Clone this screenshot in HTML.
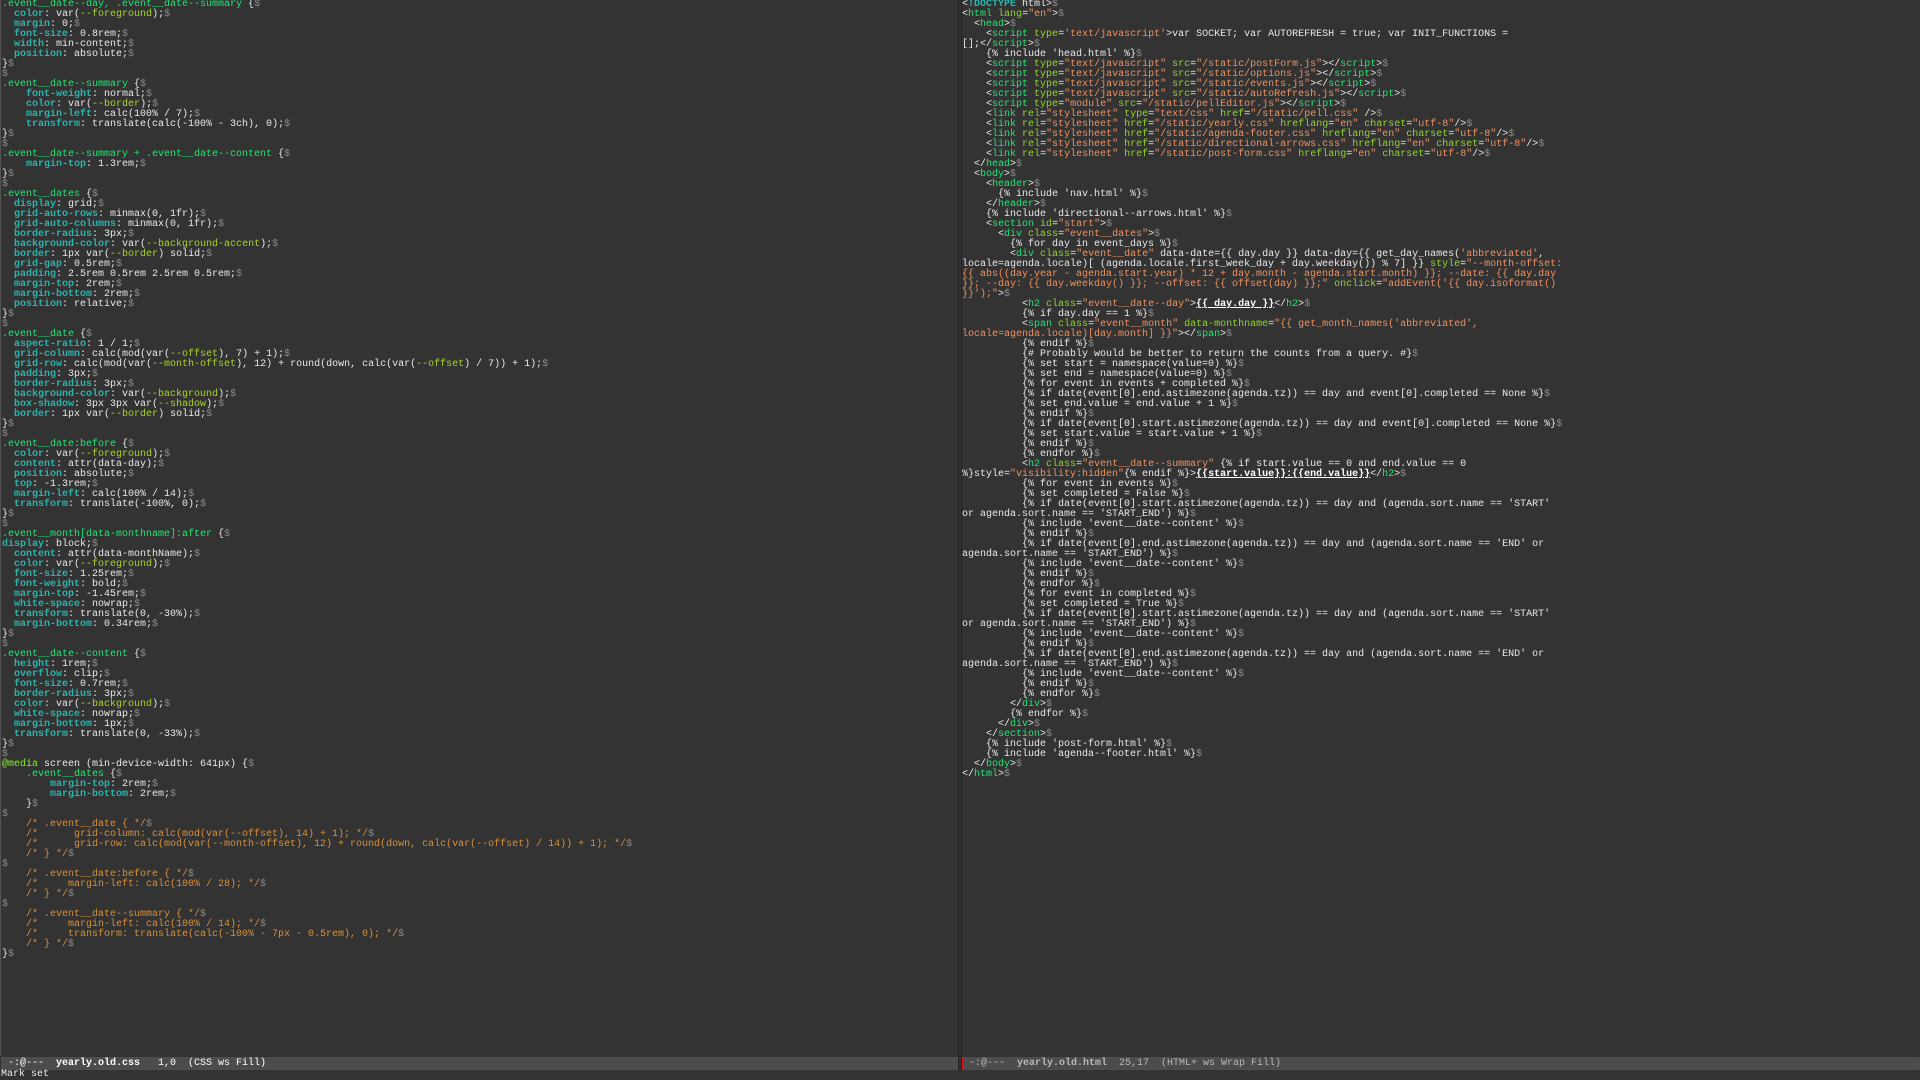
<!DOCTYPE html>
<html><head><meta charset="utf-8"><style>
html,body{margin:0;padding:0;width:1920px;height:1080px;overflow:hidden;background:#333;}
pre{margin:0;font-family:"Liberation Mono","DejaVu Sans Mono",monospace;font-size:10px;line-height:10px;color:#e8e8e8;white-space:pre;overflow:hidden;position:absolute;}
#l{left:2px;top:0;width:955px;height:1056px;}
#r{left:962px;top:0;width:956px;height:1056px;}
.s{color:#1ee872}.p{color:#26b5ad;font-weight:bold}.y{color:#a6d424}.d{color:#8a8a8a}.c{color:#d98f38}
.t{color:#1ee872}.a{color:#8fd42a}.q{color:#f0905e}.b{font-weight:bold;text-decoration:underline;color:#fff}.k{color:#26b5ad;font-weight:bold}.m{color:#80f020}
#div1{position:absolute;left:958px;top:0;width:1px;height:1070px;background:#222}
#div2{position:absolute;left:961px;top:0;width:1px;height:1070px;background:#222}
#edge{position:absolute;left:0;top:0;width:1px;height:1056px;background:#555}
.ml{position:absolute;top:1057px;height:11px;background:#4c4c4c;border:1px solid #e01010;font-family:"Liberation Mono",monospace;font-size:10px;line-height:11px;white-space:pre;color:#fff}
#mb{position:absolute;left:1px;top:1069px;font-family:"Liberation Mono",monospace;font-size:10px;line-height:11px;color:#eee;white-space:pre}
</style></head><body>
<div id="edge"></div><div id="div1"></div><div id="div2"></div>
<pre id="l"><span class="s">.event__date--day, .event__date--summary</span> {<span class="d">$</span>
  <span class="p">color</span>: var(<span class="y">--foreground</span>);<span class="d">$</span>
  <span class="p">margin</span>: 0;<span class="d">$</span>
  <span class="p">font-size</span>: 0.8rem;<span class="d">$</span>
  <span class="p">width</span>: min-content;<span class="d">$</span>
  <span class="p">position</span>: absolute;<span class="d">$</span>
}<span class="d">$</span>
<span class="d">$</span>
<span class="s">.event__date--summary</span> {<span class="d">$</span>
    <span class="p">font-weight</span>: normal;<span class="d">$</span>
    <span class="p">color</span>: var(<span class="y">--border</span>);<span class="d">$</span>
    <span class="p">margin-left</span>: calc(100% / 7);<span class="d">$</span>
    <span class="p">transform</span>: translate(calc(-100% - 3ch), 0);<span class="d">$</span>
}<span class="d">$</span>
<span class="d">$</span>
<span class="s">.event__date--summary + .event__date--content</span> {<span class="d">$</span>
    <span class="p">margin-top</span>: 1.3rem;<span class="d">$</span>
}<span class="d">$</span>
<span class="d">$</span>
<span class="s">.event__dates</span> {<span class="d">$</span>
  <span class="p">display</span>: grid;<span class="d">$</span>
  <span class="p">grid-auto-rows</span>: minmax(0, 1fr);<span class="d">$</span>
  <span class="p">grid-auto-columns</span>: minmax(0, 1fr);<span class="d">$</span>
  <span class="p">border-radius</span>: 3px;<span class="d">$</span>
  <span class="p">background-color</span>: var(<span class="y">--background-accent</span>);<span class="d">$</span>
  <span class="p">border</span>: 1px var(<span class="y">--border</span>) solid;<span class="d">$</span>
  <span class="p">grid-gap</span>: 0.5rem;<span class="d">$</span>
  <span class="p">padding</span>: 2.5rem 0.5rem 2.5rem 0.5rem;<span class="d">$</span>
  <span class="p">margin-top</span>: 2rem;<span class="d">$</span>
  <span class="p">margin-bottom</span>: 2rem;<span class="d">$</span>
  <span class="p">position</span>: relative;<span class="d">$</span>
}<span class="d">$</span>
<span class="d">$</span>
<span class="s">.event__date</span> {<span class="d">$</span>
  <span class="p">aspect-ratio</span>: 1 / 1;<span class="d">$</span>
  <span class="p">grid-column</span>: calc(mod(var(<span class="y">--offset</span>), 7) + 1);<span class="d">$</span>
  <span class="p">grid-row</span>: calc(mod(var(<span class="y">--month-offset</span>), 12) + round(down, calc(var(<span class="y">--offset</span>) / 7)) + 1);<span class="d">$</span>
  <span class="p">padding</span>: 3px;<span class="d">$</span>
  <span class="p">border-radius</span>: 3px;<span class="d">$</span>
  <span class="p">background-color</span>: var(<span class="y">--background</span>);<span class="d">$</span>
  <span class="p">box-shadow</span>: 3px 3px var(<span class="y">--shadow</span>);<span class="d">$</span>
  <span class="p">border</span>: 1px var(<span class="y">--border</span>) solid;<span class="d">$</span>
}<span class="d">$</span>
<span class="d">$</span>
<span class="s">.event__date:before</span> {<span class="d">$</span>
  <span class="p">color</span>: var(<span class="y">--foreground</span>);<span class="d">$</span>
  <span class="p">content</span>: attr(data-day);<span class="d">$</span>
  <span class="p">position</span>: absolute;<span class="d">$</span>
  <span class="p">top</span>: -1.3rem;<span class="d">$</span>
  <span class="p">margin-left</span>: calc(100% / 14);<span class="d">$</span>
  <span class="p">transform</span>: translate(-100%, 0);<span class="d">$</span>
}<span class="d">$</span>
<span class="d">$</span>
<span class="s">.event__month[data-monthname]:after</span> {<span class="d">$</span>
<span class="p">display</span>: block;<span class="d">$</span>
  <span class="p">content</span>: attr(data-monthName);<span class="d">$</span>
  <span class="p">color</span>: var(<span class="y">--foreground</span>);<span class="d">$</span>
  <span class="p">font-size</span>: 1.25rem;<span class="d">$</span>
  <span class="p">font-weight</span>: bold;<span class="d">$</span>
  <span class="p">margin-top</span>: -1.45rem;<span class="d">$</span>
  <span class="p">white-space</span>: nowrap;<span class="d">$</span>
  <span class="p">transform</span>: translate(0, -30%);<span class="d">$</span>
  <span class="p">margin-bottom</span>: 0.34rem;<span class="d">$</span>
}<span class="d">$</span>
<span class="d">$</span>
<span class="s">.event__date--content</span> {<span class="d">$</span>
  <span class="p">height</span>: 1rem;<span class="d">$</span>
  <span class="p">overflow</span>: clip;<span class="d">$</span>
  <span class="p">font-size</span>: 0.7rem;<span class="d">$</span>
  <span class="p">border-radius</span>: 3px;<span class="d">$</span>
  <span class="p">color</span>: var(<span class="y">--background</span>);<span class="d">$</span>
  <span class="p">white-space</span>: nowrap;<span class="d">$</span>
  <span class="p">margin-bottom</span>: 1px;<span class="d">$</span>
  <span class="p">transform</span>: translate(0, -33%);<span class="d">$</span>
}<span class="d">$</span>
<span class="d">$</span>
<span class="m">@media</span> screen (min-device-width: 641px) {<span class="d">$</span>
    <span class="s">.event__dates</span> {<span class="d">$</span>
        <span class="p">margin-top</span>: 2rem;<span class="d">$</span>
        <span class="p">margin-bottom</span>: 2rem;<span class="d">$</span>
    }<span class="d">$</span>
<span class="d">$</span>
<span class="c">    /* .event__date { */</span><span class="d">$</span>
<span class="c">    /*      grid-column: calc(mod(var(--offset), 14) + 1); */</span><span class="d">$</span>
<span class="c">    /*      grid-row: calc(mod(var(--month-offset), 12) + round(down, calc(var(--offset) / 14)) + 1); */</span><span class="d">$</span>
<span class="c">    /* } */</span><span class="d">$</span>
<span class="d">$</span>
<span class="c">    /* .event__date:before { */</span><span class="d">$</span>
<span class="c">    /*     margin-left: calc(100% / 28); */</span><span class="d">$</span>
<span class="c">    /* } */</span><span class="d">$</span>
<span class="d">$</span>
<span class="c">    /* .event__date--summary { */</span><span class="d">$</span>
<span class="c">    /*     margin-left: calc(100% / 14); */</span><span class="d">$</span>
<span class="c">    /*     transform: translate(calc(-100% - 7px - 0.5rem), 0); */</span><span class="d">$</span>
<span class="c">    /* } */</span><span class="d">$</span>
}<span class="d">$</span></pre>
<pre id="r">&lt;<span class="k">!DOCTYPE</span> html&gt;<span class="d">$</span>
&lt;<span class="t">html</span> <span class="a">lang</span>=<span class="q">"en"</span>&gt;<span class="d">$</span>
  &lt;<span class="t">head</span>&gt;<span class="d">$</span>
    &lt;<span class="t">script</span> <span class="a">type</span>=<span class="q">'text/javascript'</span>&gt;var SOCKET; var AUTOREFRESH = true; var INIT_FUNCTIONS =
[];&lt;/<span class="t">script</span>&gt;<span class="d">$</span>
    {% include 'head.html' %}<span class="d">$</span>
    &lt;<span class="t">script</span> <span class="a">type</span>=<span class="q">"text/javascript"</span> <span class="a">src</span>=<span class="q">"/static/postForm.js"</span>&gt;&lt;/<span class="t">script</span>&gt;<span class="d">$</span>
    &lt;<span class="t">script</span> <span class="a">type</span>=<span class="q">"text/javascript"</span> <span class="a">src</span>=<span class="q">"/static/options.js"</span>&gt;&lt;/<span class="t">script</span>&gt;<span class="d">$</span>
    &lt;<span class="t">script</span> <span class="a">type</span>=<span class="q">"text/javascript"</span> <span class="a">src</span>=<span class="q">"/static/events.js"</span>&gt;&lt;/<span class="t">script</span>&gt;<span class="d">$</span>
    &lt;<span class="t">script</span> <span class="a">type</span>=<span class="q">"text/javascript"</span> <span class="a">src</span>=<span class="q">"/static/autoRefresh.js"</span>&gt;&lt;/<span class="t">script</span>&gt;<span class="d">$</span>
    &lt;<span class="t">script</span> <span class="a">type</span>=<span class="q">"module"</span> <span class="a">src</span>=<span class="q">"/static/pellEditor.js"</span>&gt;&lt;/<span class="t">script</span>&gt;<span class="d">$</span>
    &lt;<span class="t">link</span> <span class="a">rel</span>=<span class="q">"stylesheet"</span> <span class="a">type</span>=<span class="q">"text/css"</span> <span class="a">href</span>=<span class="q">"/static/pell.css"</span> /&gt;<span class="d">$</span>
    &lt;<span class="t">link</span> <span class="a">rel</span>=<span class="q">"stylesheet"</span> <span class="a">href</span>=<span class="q">"/static/yearly.css"</span> <span class="a">hreflang</span>=<span class="q">"en"</span> <span class="a">charset</span>=<span class="q">"utf-8"</span>/&gt;<span class="d">$</span>
    &lt;<span class="t">link</span> <span class="a">rel</span>=<span class="q">"stylesheet"</span> <span class="a">href</span>=<span class="q">"/static/agenda-footer.css"</span> <span class="a">hreflang</span>=<span class="q">"en"</span> <span class="a">charset</span>=<span class="q">"utf-8"</span>/&gt;<span class="d">$</span>
    &lt;<span class="t">link</span> <span class="a">rel</span>=<span class="q">"stylesheet"</span> <span class="a">href</span>=<span class="q">"/static/directional-arrows.css"</span> <span class="a">hreflang</span>=<span class="q">"en"</span> <span class="a">charset</span>=<span class="q">"utf-8"</span>/&gt;<span class="d">$</span>
    &lt;<span class="t">link</span> <span class="a">rel</span>=<span class="q">"stylesheet"</span> <span class="a">href</span>=<span class="q">"/static/post-form.css"</span> <span class="a">hreflang</span>=<span class="q">"en"</span> <span class="a">charset</span>=<span class="q">"utf-8"</span>/&gt;<span class="d">$</span>
  &lt;/<span class="t">head</span>&gt;<span class="d">$</span>
  &lt;<span class="t">body</span>&gt;<span class="d">$</span>
    &lt;<span class="t">header</span>&gt;<span class="d">$</span>
      {% include 'nav.html' %}<span class="d">$</span>
    &lt;/<span class="t">header</span>&gt;<span class="d">$</span>
    {% include 'directional--arrows.html' %}<span class="d">$</span>
    &lt;<span class="t">section</span> <span class="a">id</span>=<span class="q">"start"</span>&gt;<span class="d">$</span>
      &lt;<span class="t">div</span> <span class="a">class</span>=<span class="q">"event__dates"</span>&gt;<span class="d">$</span>
        {% for day in event_days %}<span class="d">$</span>
        &lt;<span class="t">div</span> <span class="a">class</span>=<span class="q">"event__date"</span> data-date={{ day.day }} data-day={{ get_day_names(<span class="q">'abbreviated'</span>,
locale=agenda.locale)[ (agenda.locale.first_week_day + day.weekday()) % 7] }} <span class="a">style</span>=<span class="q">"--month-offset:</span>
<span class="q">{{ abs((day.year - agenda.start.year) * 12 + day.month - agenda.start.month) }}; --date: {{ day.day</span>
<span class="q">}}; --day: {{ day.weekday() }}; --offset: {{ offset(day) }};"</span> <span class="a">onclick</span>=<span class="q">"addEvent('{{ day.isoformat()</span>
<span class="q">}}');"</span>&gt;<span class="d">$</span>
          &lt;<span class="t">h2</span> <span class="a">class</span>=<span class="q">"event__date--day"</span>&gt;<span class="b">{{ day.day }}</span>&lt;/<span class="t">h2</span>&gt;<span class="d">$</span>
          {% if day.day == 1 %}<span class="d">$</span>
          &lt;<span class="t">span</span> <span class="a">class</span>=<span class="q">"event__month"</span> <span class="a">data-monthname</span>=<span class="q">"{{ get_month_names('abbreviated',</span>
<span class="q">locale=agenda.locale)[day.month] }}"</span>&gt;&lt;/<span class="t">span</span>&gt;<span class="d">$</span>
          {% endif %}<span class="d">$</span>
          {# Probably would be better to return the counts from a query. #}<span class="d">$</span>
          {% set start = namespace(value=0) %}<span class="d">$</span>
          {% set end = namespace(value=0) %}<span class="d">$</span>
          {% for event in events + completed %}<span class="d">$</span>
          {% if date(event[0].end.astimezone(agenda.tz)) == day and event[0].completed == None %}<span class="d">$</span>
          {% set end.value = end.value + 1 %}<span class="d">$</span>
          {% endif %}<span class="d">$</span>
          {% if date(event[0].start.astimezone(agenda.tz)) == day and event[0].completed == None %}<span class="d">$</span>
          {% set start.value = start.value + 1 %}<span class="d">$</span>
          {% endif %}<span class="d">$</span>
          {% endfor %}<span class="d">$</span>
          &lt;<span class="t">h2</span> <span class="a">class</span>=<span class="q">"event__date--summary"</span> {% if start.value == 0 and end.value == 0
%}style=<span class="q">"visibility:hidden"</span>{% endif %}&gt;<span class="b">{{start.value}}:{{end.value}}</span>&lt;/<span class="t">h2</span>&gt;<span class="d">$</span>
          {% for event in events %}<span class="d">$</span>
          {% set completed = False %}<span class="d">$</span>
          {% if date(event[0].start.astimezone(agenda.tz)) == day and (agenda.sort.name == 'START'
or agenda.sort.name == 'START_END') %}<span class="d">$</span>
          {% include 'event__date--content' %}<span class="d">$</span>
          {% endif %}<span class="d">$</span>
          {% if date(event[0].end.astimezone(agenda.tz)) == day and (agenda.sort.name == 'END' or
agenda.sort.name == 'START_END') %}<span class="d">$</span>
          {% include 'event__date--content' %}<span class="d">$</span>
          {% endif %}<span class="d">$</span>
          {% endfor %}<span class="d">$</span>
          {% for event in completed %}<span class="d">$</span>
          {% set completed = True %}<span class="d">$</span>
          {% if date(event[0].start.astimezone(agenda.tz)) == day and (agenda.sort.name == 'START'
or agenda.sort.name == 'START_END') %}<span class="d">$</span>
          {% include 'event__date--content' %}<span class="d">$</span>
          {% endif %}<span class="d">$</span>
          {% if date(event[0].end.astimezone(agenda.tz)) == day and (agenda.sort.name == 'END' or
agenda.sort.name == 'START_END') %}<span class="d">$</span>
          {% include 'event__date--content' %}<span class="d">$</span>
          {% endif %}<span class="d">$</span>
          {% endfor %}<span class="d">$</span>
        &lt;/<span class="t">div</span>&gt;<span class="d">$</span>
        {% endfor %}<span class="d">$</span>
      &lt;/<span class="t">div</span>&gt;<span class="d">$</span>
    &lt;/<span class="t">section</span>&gt;<span class="d">$</span>
    {% include 'post-form.html' %}<span class="d">$</span>
    {% include 'agenda--footer.html' %}<span class="d">$</span>
  &lt;/<span class="t">body</span>&gt;<span class="d">$</span>
&lt;/<span class="t">html</span>&gt;<span class="d">$</span></pre>
<div class="ml" style="left:1px;width:955px;"> -:@---  <b>yearly.old.css</b>   1,0  (CSS ws Fill)</div>
<div class="ml" style="left:962px;width:956px;color:#b8b8b8;"> -:@---  <b>yearly.old.html</b>  25,17  (HTML+ ws Wrap Fill)</div>
<div id="mb">Mark set</div>
</body></html>
